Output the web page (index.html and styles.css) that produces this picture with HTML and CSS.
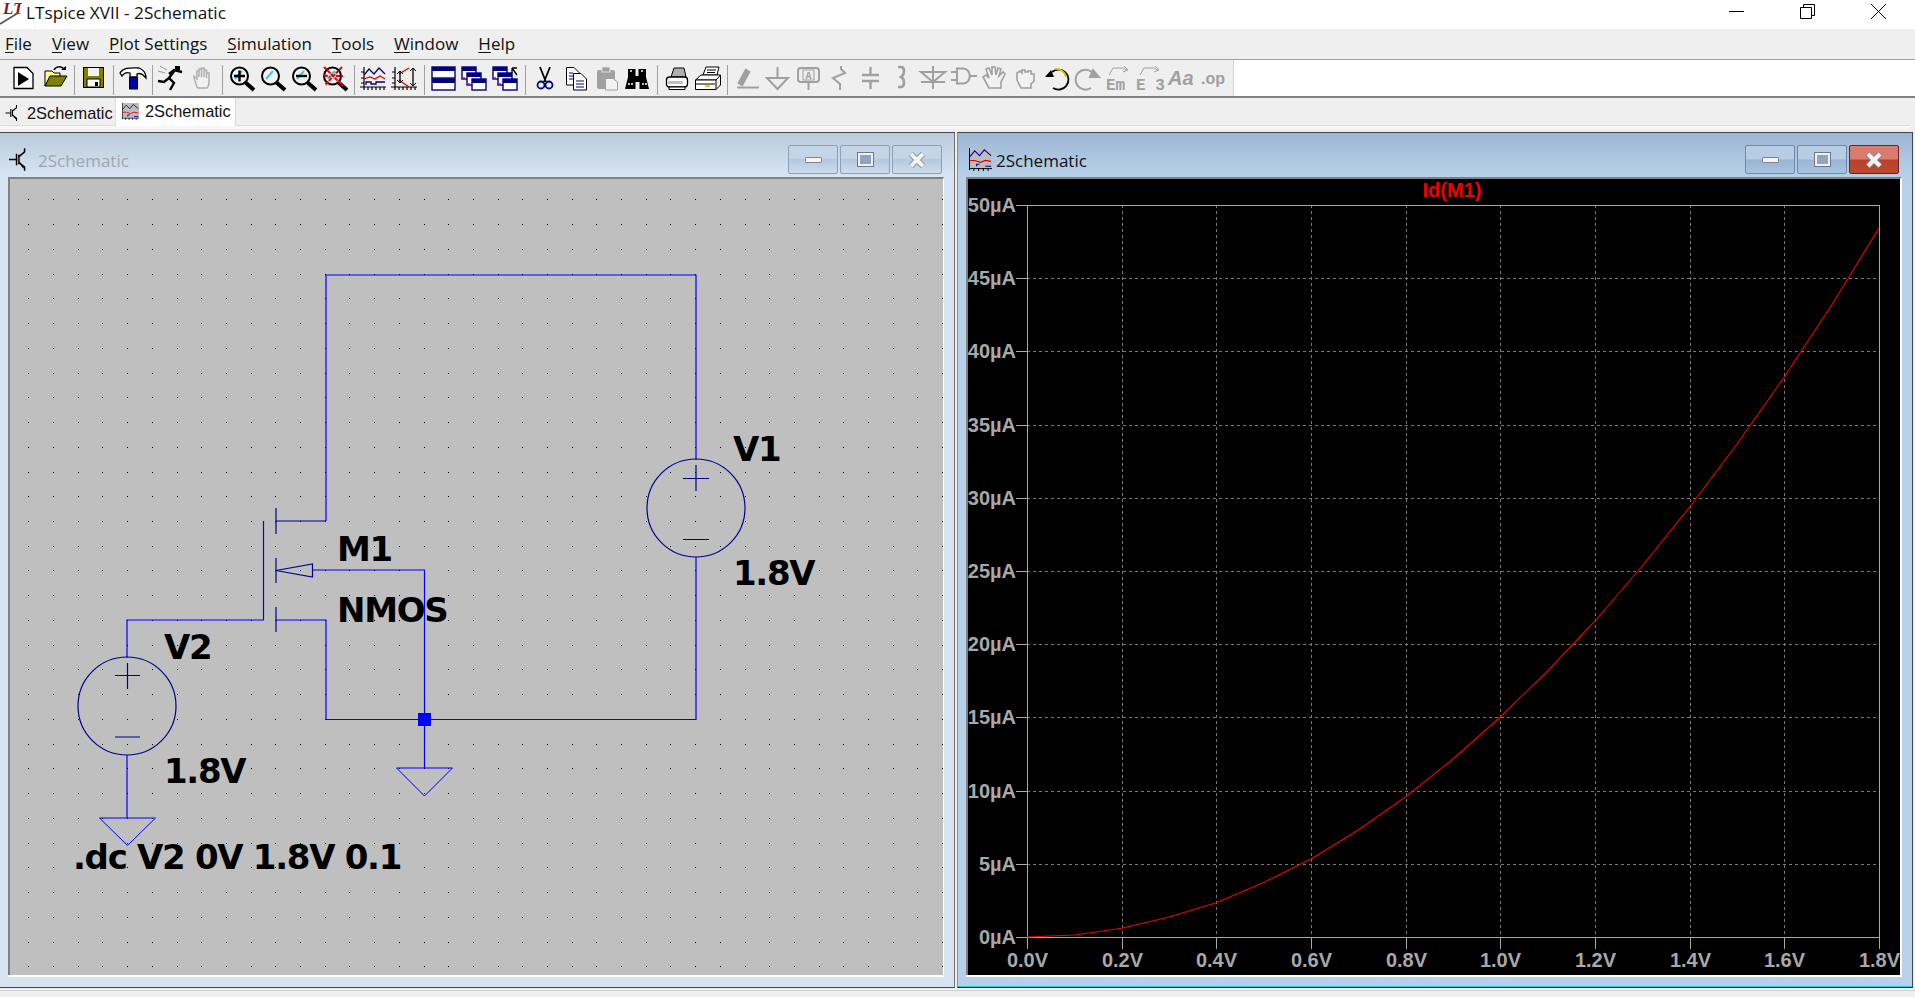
FILE: index.html
```html
<!DOCTYPE html>
<html lang="en">
<head>
  <meta charset="UTF-8" />
  <title>LTspice XVII - 2Schematic</title>
  <link rel="stylesheet" href="styles.css">
</head>
<body>
  <svg class="defs" width="0" height="0">
    <symbol id="fet" viewBox="0 0 18 24">
      <path d="M0 12H8M8 6V18M10.5 7V17M10.5 9L16.5 4V0M10.5 15L16.5 20V24" fill="none" stroke="#000" stroke-width="1.6"/>
      <path d="M12 17.5L16.5 19L15 21.5Z" fill="#000"/>
    </symbol>
    <symbol id="plot" viewBox="0 0 24 24">
      <rect width="24" height="21" fill="#bdbdbd"/>
      <path d="M1 9L6 3L11 8L16 2L23 8" fill="none" stroke="#0000c0" stroke-width="1.2"/>
      <path d="M1 13H6L12 15L17 13L23 14" fill="none" stroke="#e00000" stroke-width="1.2"/>
      <path d="M8 19V17H11M17 19H23" fill="none" stroke="#0000c0" stroke-width="1.2"/>
      <path d="M0.5 0V23M0 21.5H24M5 21V24M10 21V24M15 21V24M20 21V24" fill="none" stroke="#000"/>
    </symbol>
    <symbol id="glass" viewBox="0 0 31 37">
      <circle cx="13.5" cy="16" r="8.5" fill="#f2f2f2" stroke="#000" stroke-width="2"/>
      <path d="M9 19L16 11" stroke="#30d0e0" stroke-width="2"/>
      <path d="M19.5 22.5L28 30" stroke="#000" stroke-width="4"/>
    </symbol>
    <symbol id="axes" viewBox="0 0 31 37">
      <path d="M6 7V30M2 27H28M10 27V30M14 27V30M18 27V30M22 27V30M26 27V30M3 12H6M3 18H6M3 23H6" fill="none" stroke="#000" stroke-width="1.2"/>
    </symbol>
    <symbol id="cascade" viewBox="0 0 31 37">
      <g fill="#fff" stroke="#000080" stroke-width="1.4">
        <rect x="3" y="7" width="14" height="12"/>
        <rect x="8" y="13" width="14" height="12"/>
        <rect x="13" y="19" width="14" height="11"/>
      </g>
      <path d="M3 7h14v4H3zM8 13h14v4H8zM13 19h14v4H13z" fill="#000080"/>
      <path d="M3 18h3M8 24h3" stroke="#c000c0" stroke-width="1.4"/>
    </symbol>
  </svg>

  <header class="titlebar">
    <svg class="logo" width="22" height="29" viewBox="0 0 22 29">
      <text class="logo-text" x="3" y="14">LT</text>
      <path d="M0 24L18 13" stroke="#555" stroke-width="1.5"/>
    </svg>
    <span class="app-title">LTspice XVII - 2Schematic</span>
    <div class="sys-buttons">
      <svg width="15" height="15" viewBox="0 0 15 15"><path d="M0 7.5H15" stroke="#000"/></svg>
      <svg width="15" height="15" viewBox="0 0 15 15"><path d="M0.5 3.5H11.5V14.5H0.5ZM3.5 3.5V0.5H14.5V11.5H11.5" fill="none" stroke="#000"/></svg>
      <svg width="15" height="15" viewBox="0 0 15 15"><path d="M0 0L15 15M15 0L0 15" stroke="#000"/></svg>
    </div>
  </header>

  <nav class="menubar">
    <span><u>F</u>ile</span>
    <span><u>V</u>iew</span>
    <span><u>P</u>lot Settings</span>
    <span><u>S</u>imulation</span>
    <span><u>T</u>ools</span>
    <span><u>W</u>indow</span>
    <span><u>H</u>elp</span>
  </nav>

  <div class="toolbar">
    <div class="tools">
      <!-- new -->
      <svg class="tool"><path d="M6 7.5H19L25 13.5V28.5H6Z" fill="#fff" stroke="#000" stroke-width="1.3"/><path d="M10 12L21 19L10 26Z" fill="#000"/></svg>
      <!-- open -->
      <svg class="tool"><path d="M6 26V11H13L15 13H21V17H11L6 26Z" fill="#ffff90" stroke="#000"/><path d="M6 26L11 16H28L22 26Z" fill="#808000" stroke="#000"/><path d="M15 10C17 6 22 6 25 9" fill="none" stroke="#000" stroke-width="1.5"/><path d="M22 10H27V6Z" fill="#000"/></svg>
      <i class="sep"></i>
      <!-- save -->
      <svg class="tool"><rect x="5.5" y="7.5" width="20" height="20" fill="#808000" stroke="#000"/><rect x="10" y="8" width="11" height="8" fill="#f2f2f2"/><rect x="9" y="19" width="13" height="8" fill="#fff" stroke="#000"/><rect x="17" y="22" width="3" height="4" fill="#000"/></svg>
      <i class="sep"></i>
      <!-- hammer -->
      <svg class="tool"><path d="M3 13C7 7 14 8 22 8C27 10 29 14 29 18C25 13 22 13 20 14V17H13V13C10 12 7 13 5 16Z" fill="#fff" stroke="#000" stroke-width="1.3"/><rect x="12.5" y="17.5" width="8" height="11.5" fill="#0000a8" stroke="#000"/></svg>
      <i class="sep"></i>
      <!-- run -->
      <svg class="tool run"><path d="M19 10L13 18L18 23L14 30M13 18L8 22L2 21M13 14L18 10L26 12" fill="none" stroke="#000" stroke-width="2.4"/><rect x="19" y="6" width="5" height="4"/><path d="M4 6L11 10M2 11L9 13" stroke="#999"/></svg>
      <!-- hand -->
      <svg class="tool"><path d="M10 27L7 18V16L10 19V11H12V17V9H14.5V17V8H17V17V10H19.5V18V13H22V21C22 25 21 27 20 28H11Z" fill="#f2f2f2" stroke="#b0b0b0" stroke-width="1.5"/></svg>
      <i class="sep"></i>
      <!-- zoom in, zoom fit, zoom out, cancel zoom -->
      <svg class="tool"><use href="#glass"/><path d="M8 16H19M13.5 10.5V21.5" stroke="#000" stroke-width="2.4"/></svg>
      <svg class="tool"><use href="#glass"/></svg>
      <svg class="tool"><use href="#glass"/><path d="M8 16H19" stroke="#000" stroke-width="2.4"/></svg>
      <svg class="tool"><use href="#glass"/><path d="M5 7L24 26M23 7L6 25M5 15L11 17M17 16H24" stroke="#f00000" stroke-width="2" stroke-dasharray="4 1"/></svg>
      <i class="sep"></i>
      <!-- waveforms -->
      <svg class="tool"><use href="#axes"/><path d="M6 15L11 9L16 14L21 8L27 14" fill="none" stroke="#000080" stroke-width="1.3"/><path d="M6 19L12 17L17 19L22 16L27 19" fill="none" stroke="#e00000" stroke-width="1.3"/><path d="M8 25V22H13V24H18V22H27" fill="none" stroke="#000080" stroke-width="1.3"/></svg>
      <svg class="tool"><use href="#axes"/><path d="M10 14L20 8M10 20L20 27" fill="none" stroke="#e00000" stroke-width="1.3"/><path d="M11 11V23M24 8V26" stroke="#000" stroke-width="1.3"/><path d="M8 14L11 11L14 14M8 20L11 23L14 20M21 11L24 8L27 11M21 23L24 26L27 23" fill="none" stroke="#000"/></svg>
      <i class="sep"></i>
      <!-- tile, cascade, arrange -->
      <svg class="tool"><rect x="4" y="7" width="23" height="11" fill="#fff" stroke="#000080" stroke-width="1.4"/><rect x="4" y="19" width="23" height="11" fill="#fff" stroke="#000080" stroke-width="1.4"/><path d="M4 7h23v4H4zM4 19h23v4H4z" fill="#000080"/></svg>
      <svg class="tool"><use href="#cascade"/></svg>
      <svg class="tool"><use href="#cascade"/><path d="M27 15L22 8M22 8H27M22 8V13" fill="none" stroke="#000" stroke-width="1.3"/></svg>
      <i class="sep"></i>
      <!-- cut -->
      <svg class="tool"><path d="M11 7L17 22M21 7L15 22" stroke="#000" stroke-width="1.8"/><circle cx="12" cy="25" r="3.5" fill="none" stroke="#000080" stroke-width="1.8"/><circle cx="20" cy="25" r="3.5" fill="none" stroke="#000080" stroke-width="1.8"/></svg>
      <!-- copy -->
      <svg class="tool"><path d="M6.5 7.5H14L19 12.5V25H6.5Z" fill="#fff" stroke="#000"/><path d="M13.5 13.5H21L26.5 19V30H13.5Z" fill="#fff" stroke="#000"/><path d="M9 13H13M9 16H13M9 19H13M16 21H24M16 24H24M16 27H24" stroke="#000080"/></svg>
      <!-- paste -->
      <svg class="tool"><rect x="6" y="10" width="18" height="19" rx="2" fill="#a0a0a0"/><rect x="11" y="7" width="8" height="5" fill="#a0a0a0" stroke="#e0e0e0"/><path d="M14.5 18.5H22L26.5 22V30H14.5Z" fill="#f2f2f2" stroke="#a0a0a0"/></svg>
      <!-- find -->
      <svg class="tool"><path d="M6 9H13.5V16H16.5V9H24V17L27 29H17.5V22H13.5V29H3L6 17Z" fill="#000"/><path d="M8 11H11M19 11H22M6 24H11M20 24H25" stroke="#fff" stroke-width="1.4" stroke-dasharray="2 1"/></svg>
      <i class="sep"></i>
      <!-- print, print setup -->
      <svg class="tool"><path d="M10 17L13 8H23L25 17Z" fill="#b0b0b0" stroke="#000"/><rect x="5.5" y="17" width="21" height="10" rx="3" fill="#fff" stroke="#000" stroke-width="1.3"/><path d="M8 27H24V29.5H8Z" fill="#fff" stroke="#000"/><path d="M7 21H22V24H7Z" fill="#c0c0c0"/></svg>
      <svg class="tool"><path d="M11 15L14 7H27L25 15Z" fill="#fff" stroke="#000"/><path d="M15 10H24M15 12.5H23" stroke="#000"/><path d="M3.5 20L9 15H28.5L24 20Z" fill="#fff" stroke="#000"/><path d="M3.5 20H24V29.5H3.5Z" fill="#fff" stroke="#000"/><path d="M24 29.5L28.5 25V15" fill="none" stroke="#000"/><path d="M4 24H23" stroke="#000"/><rect x="13" y="25" width="5" height="2" fill="#e0d000"/></svg>
      <i class="sep"></i>
      <!-- schematic parts, all greyed out -->
      <svg class="tool off"><path d="M9 25L17 10" stroke-width="6"/><path d="M6 27.5H28"/></svg>
      <svg class="tool off"><path d="M15.5 7V18M5 18H26L15.5 29Z"/></svg>
      <svg class="tool off"><rect x="5" y="8" width="21" height="14" rx="3"/><rect x="10" y="10" width="11" height="10" stroke-width="1"/><text class="part-a" x="15.5" y="19" text-anchor="middle">A</text><path d="M15.5 22V30"/></svg>
      <svg class="tool off"><path d="M17 6V9L21 13L9 18L16 24V30"/></svg>
      <svg class="tool off"><path d="M15.5 7V15M7 15H24M7 21H24M15.5 21V29" stroke-width="2.4"/></svg>
      <svg class="tool off"><path d="M12 7H15C19 7 19 14 15 17C19 19 19 26 15 27H12" stroke-width="2.6"/></svg>
      <svg class="tool off"><path d="M16 6V29M4 12H28L16 22ZM4 22H28"/></svg>
      <svg class="tool off"><path d="M3 12H9M3 20H9M9 8.5H15C24 8.5 24 23.5 15 23.5H9ZM21 16H29"/></svg>
      <svg class="tool off hand"><path d="M10 28L4 17L7 15L10 18L7 9L10 8L13 15L13 7H16L17 15L19 8L22 9L20 16L24 12L26 14L22 22V28Z"/></svg>
      <svg class="tool off hand"><path d="M11 28L7 20V13L10 11L12 13V10H15V12H18V11H21V14L24 14V21L21 24V28Z"/></svg>
      <svg class="tool"><path d="M11 12A10 10 0 1 1 12 28" fill="none" stroke="#000" stroke-width="1.8"/><path d="M14 9A10 10 0 0 1 25 17" fill="none" stroke="#d8c000" stroke-width="1.8"/><path d="M4 17H13L10 10Z" fill="#000"/></svg>
      <svg class="tool off"><path d="M20 12A10 10 0 1 0 19 28"/><path d="M27 17H18L21 10Z" fill="#a0a0a0"/></svg>
      <svg class="tool off"><path d="M6 15L10 8H20L24 10M21 6L25 10L20 12" stroke-width="1"/><text class="part-e" x="3" y="30">Em</text></svg>
      <svg class="tool off"><path d="M6 15L10 8H20L24 10M21 6L25 10L20 12" stroke-width="1"/><text class="part-e" x="2" y="30">E 3</text></svg>
      <svg class="tool off"><text class="part-aa" x="3" y="25">Aa</text></svg>
      <svg class="tool off"><text class="part-op" x="5" y="24">.op</text></svg>
    </div>
  </div>

  <div class="tabs">
    <div class="tab">
      <svg class="tab-fet"><use href="#fet"/></svg>
      <span>2Schematic</span>
    </div>
    <div class="tab active">
      <svg class="tab-plot"><use href="#plot"/></svg>
      <span>2Schematic</span>
    </div>
  </div>
  <div class="tab-strip"></div>

  <main class="mdi">
    <section class="win schematic">
      <div class="win-title">
        <svg class="win-fet"><use href="#fet"/></svg>
        <span class="win-name">2Schematic</span>
        <div class="win-buttons">
          <button class="win-btn"><i class="glyph-min"></i></button>
          <button class="win-btn"><i class="glyph-max"></i></button>
          <button class="win-btn"><svg width="20" height="20" viewBox="0 0 20 20"><path d="M4 4L16 16M16 4L4 16" stroke="#808890" stroke-width="6"/><path d="M4 4L16 16M16 4L4 16" stroke="#f4f4f4" stroke-width="4"/></svg></button>
        </div>
      </div>
      <div class="client">
        <svg id="schematic" class="canvas" viewBox="10 179 933 796">
          <g id="dots"></g>
          <g class="wires">
            <path d="M326 521V275H696V460M696 557V719.5H326V620H276M424.5 719.5V570H312M424.5 719.5V768"/>
            <path d="M263.5 521V620H127V658M127 755V818"/>
          </g>
          <g class="part">
            <path d="M276 508V534M276 558V583M276 607V632M276 521H326"/>
            <path d="M276 570.5L312.5 564V577Z"/>
            <circle cx="127" cy="706" r="49"/>
            <path d="M115 675.5H140M127.5 663V689M115 737H140"/>
            <circle cx="696" cy="508" r="49"/>
            <path d="M683 478.5H709M696 465V491M683 539.5H709"/>
          </g>
          <g class="grounds">
            <path d="M99.5 818H155.5L127.5 845.5Z"/>
            <path d="M396.5 768H452.5L424.5 796Z"/>
          </g>
          <rect class="junction" x="418" y="713" width="13" height="13"/>
          <g class="netlist">
            <text x="733" y="461">V1</text>
            <text x="733" y="585">1.8V</text>
            <text x="337" y="561">M1</text>
            <text x="337" y="622">NMOS</text>
            <text x="164" y="659">V2</text>
            <text x="164" y="783">1.8V</text>
            <text x="73" y="869">.dc V2 0V 1.8V 0.1</text>
          </g>
        </svg>
      </div>
    </section>

    <section class="win waveform">
      <div class="win-title">
        <svg class="win-plot"><use href="#plot"/></svg>
        <span class="win-name">2Schematic</span>
        <div class="win-buttons">
          <button class="win-btn"><i class="glyph-min"></i></button>
          <button class="win-btn"><i class="glyph-max"></i></button>
          <button class="win-btn close"><svg width="20" height="20" viewBox="0 0 20 20"><path d="M4 4L16 16M16 4L4 16" stroke="#808890" stroke-width="6"/><path d="M4 4L16 16M16 4L4 16" stroke="#f4f4f4" stroke-width="4"/></svg></button>
        </div>
      </div>
      <div class="client">
        <svg id="plotArea" class="canvas black" viewBox="968 179 932 796">
          <text class="trace-name" x="1452" y="197" text-anchor="middle">Id(M1)</text>
          <g id="grid"></g>
          <polyline class="trace" points=""/>
        </svg>
      </div>
    </section>
  </main>
  <footer class="statusbar"></footer>

  <script src="script.js"></script>
</body>
</html>
```

FILE: styles.css
```css
* {
  box-sizing: border-box;
}
body {
  margin: 0;
  width: 1915px;
  height: 997px;
  overflow: hidden;
  background: #efefef;
  font-family: "Open Sans", "Noto Sans", sans-serif;
  color: #111;
}
.defs {
  position: absolute;
}

.titlebar {
  height: 29px;
  background: white;
  display: flex;
  align-items: center;
  overflow: hidden;
}
.logo {
  flex: none;
}
.logo-text {
  font: italic bold 17px "Liberation Serif", serif;
  fill: #8b1a1a;
}
.app-title {
  margin-left: 4px;
  margin-top: -4px;
  font-size: 17.2px;
}
.sys-buttons {
  margin-left: auto;
  padding-right: 29px;
  display: flex;
  gap: 56px;
  margin-top: -6px;
}

.menubar {
  height: 31px;
  display: flex;
  align-items: center;
  gap: 20px;
  padding-left: 5px;
  padding-bottom: 1px;
  font-size: 17px;
  border-bottom: 1px solid #a0a0a0;
}
.menubar u {
  text-underline-offset: 2px;
}

.toolbar {
  height: 38px;
  background: white;
  border-bottom: 2px solid #808080;
}
.tools {
  width: 1234px;
  height: 36px;
  background: #efefef;
  padding-left: 8px;
  display: flex;
  border-right: 1px solid #d0d0d0;
}
.tool {
  flex: none;
  width: 31px;
  height: 37px;
}
.tool use {
  width: 31px;
  height: 37px;
}
.sep {
  flex: none;
  width: 8px;
  height: 30px;
  margin-top: 5px;
  background: linear-gradient(#a0a0a0, #a0a0a0) center / 1px 100% no-repeat;
}
.off {
  fill: none;
  stroke: #a0a0a0;
  stroke-width: 2;
}
.off.hand {
  fill: #f2f2f2;
  stroke-width: 1.6;
}
.off text {
  fill: #a0a0a0;
  stroke: none;
}
.part-a {
  font: bold 10px "Liberation Mono", monospace;
}
.part-e {
  font: bold 16px "Liberation Mono", monospace;
}
.part-aa {
  font: italic bold 20px "Liberation Sans", sans-serif;
}
.part-op {
  font: bold 16px "Liberation Sans", sans-serif;
}

.tabs {
  height: 28px;
  display: flex;
  font-family: "Liberation Sans", sans-serif;
  font-size: 16.4px;
}
.tab {
  width: 116px;
  display: flex;
  align-items: center;
  gap: 9px;
  padding: 2px 0 0 5px;
  border-right: 1px solid #dcdcdc;
}
.tab.active {
  width: 120px;
  background: white;
  gap: 6px;
  padding: 0 0 2px 6px;
}
.tab-fet {
  width: 13px;
  height: 16px;
}
.tab-plot {
  width: 17px;
  height: 17px;
}
.tab-strip {
  height: 6px;
  margin-right: 5px;
  border-top: 3px solid #f8f8f8;
  box-shadow: 0 -1px 0 #dcdcdc;
}

.mdi {
  display: flex;
  height: 856px;
}
.win {
  display: flex;
  flex-direction: column;
  border-top: 1px solid #444;
  border-bottom: 1px solid #444;
}
.schematic {
  width: 955px;
  padding: 0 10px 10px 8px;
  border-right: 1px solid #707070;
  background: #d6e4f2;
}
.waveform {
  width: 956px;
  margin-left: 2px;
  padding: 0 10px 9px 8px;
  border-left: 1px solid #8090a0;
  border-right: 1px solid #444;
  border-bottom-color: #222;
  background: #b8d1ea;
  box-shadow: inset 0 -1px 0 #30c0e0;
}
.win-title {
  height: 44px;
  display: flex;
  align-items: center;
  flex: none;
  margin-left: -8px;
  margin-right: -10px;
  padding: 8px 0 0 9px;
  background: linear-gradient(#bccbdb, #d6e4f3);
  font-size: 17px;
}
.waveform .win-title {
  background: linear-gradient(#9cb6d3, #b8d1ea);
}
.win-fet {
  width: 17px;
  height: 23px;
}
.win-plot {
  width: 23px;
  height: 23px;
  margin-left: 2px;
}
.win-name {
  margin-left: 12px;
  margin-top: 2px;
  font-family: "Open Sans", sans-serif;
  color: #a0a6ae;
}
.waveform .win-name {
  margin-left: 4px;
  color: #111;
}
.win-buttons {
  margin-left: auto;
  display: flex;
  gap: 2px;
  padding-right: 12px;
  margin-top: 1px;
}
.waveform .win-buttons {
  padding-right: 13px;
}
.win-btn {
  width: 50px;
  height: 29px;
  padding: 0;
  display: flex;
  align-items: center;
  justify-content: center;
  border: 1px solid #8ba0bb;
  border-radius: 2px;
  background: linear-gradient(#c5d5e8 45%, #b4c8de 50%, #cddcee);
}
.waveform .win-btn {
  border-color: #6f8aa8;
  background: linear-gradient(#b8cde5 48%, #9ab4d2 52%, #a8c3e0);
}
.waveform .win-btn.close {
  border-color: #6a2030;
  background: linear-gradient(#d97b6e 48%, #b8412a 52%, #bd4a30);
}
.glyph-min {
  width: 17px;
  height: 6px;
  background: #f4f4f4;
  border: 1px solid #7b8594;
  border-radius: 1px;
}
.glyph-max {
  width: 17px;
  height: 15px;
  border: 3px solid #eef0f3;
  outline: 1px solid #70798a;
  outline-offset: -1px;
  background: #8fa5c0;
}

.client {
  flex: none;
  height: 798px;
  border-style: solid;
  border-color: #808080 white white #808080;
  border-width: 2px 1px 0 2px;
  background: #bfbfbf;
  box-shadow: 0 2px 0 white;
}
.waveform .client {
  height: 798px;
  border-width: 2px 2px 0 2px;
  background: black;
}
.canvas {
  display: block;
  width: 100%;
  height: 796px;
}

.wires {
  fill: none;
  stroke: #0000ff;
  stroke-width: 1.2;
}
.part {
  fill: none;
  stroke: #000090;
  stroke-width: 1.2;
}
.grounds {
  fill: none;
  stroke: #0000ff;
  stroke-width: 1;
}
.junction {
  fill: #0000ff;
}
.dot {
  fill: #000;
}
.netlist text {
  font: bold 34px "DejaVu Sans", sans-serif;
  letter-spacing: -1.3px;
  fill: #000;
}

.axis {
  stroke: #a8a8a8;
  stroke-width: 1;
  fill: none;
  shape-rendering: crispEdges;
}
.gridline {
  stroke: #787878;
  stroke-width: 1;
  stroke-dasharray: 3 3;
  shape-rendering: crispEdges;
}
.tick-label {
  font: bold 20px "Liberation Sans", sans-serif;
  fill: #a8a8a8;
}
.trace-name {
  font: bold 20px "Liberation Sans", sans-serif;
  fill: #f00000;
}
.trace {
  fill: none;
  stroke: #f00000;
  stroke-width: 1.1;
}

.statusbar {
  height: 8px;
  border-top: 1px solid #d0d0d0;
  margin-top: 2px;
}
```

FILE: script.js
```js
const SVG_NS = "http://www.w3.org/2000/svg";

function add(parent, tag, attrs, text) {
  const el = document.createElementNS(SVG_NS, tag);
  for (const key in attrs) el.setAttribute(key, attrs[key]);
  if (text) el.textContent = text;
  parent.appendChild(el);
}

// schematic grid dots
const dots = document.getElementById("dots");
for (let i = 0; i < 38; i++) {
  for (let j = 0; j < 32; j++) {
    add(dots, "rect", {
      class: "dot",
      x: Math.round(28.3 + 24.7 * i),
      y: Math.round(966.3 - 24.74 * j),
      width: 1,
      height: 1
    });
  }
}

// plot axes and labels
const grid = document.getElementById("grid");
const LEFT = 1027, RIGHT = 1879, TOP = 205, BOTTOM = 937;
const stepX = (RIGHT - LEFT) / 9;
const stepY = (BOTTOM - TOP) / 10;

for (let i = 0; i <= 10; i++) {
  const y = Math.round(BOTTOM - stepY * i) + 0.5;
  if (i > 0 && i < 10) add(grid, "line", { class: "gridline", x1: LEFT, y1: y, x2: RIGHT, y2: y });
  add(grid, "line", { class: "axis", x1: LEFT - 11, y1: y, x2: LEFT, y2: y });
  add(grid, "text", { class: "tick-label", x: LEFT - 11, y: y + 6.5, "text-anchor": "end" }, (i * 5) + "µA");
}
for (let i = 0; i <= 9; i++) {
  const x = Math.round(LEFT + stepX * i) + 0.5;
  if (i > 0 && i < 9) add(grid, "line", { class: "gridline", x1: x, y1: TOP, x2: x, y2: BOTTOM });
  add(grid, "line", { class: "axis", x1: x, y1: BOTTOM, x2: x, y2: BOTTOM + 12 });
  add(grid, "text", { class: "tick-label", x: x, y: BOTTOM + 30, "text-anchor": "middle" }, (i * 0.2).toFixed(1) + "V");
}
add(grid, "rect", { class: "axis", x: LEFT + 0.5, y: TOP + 0.5, width: RIGHT - LEFT, height: BOTTOM - TOP });

// Id(M1) read off the curve, one y per 0.1V
const curve = [937, 935, 928.3, 917, 902.7, 882.5, 859, 830, 796.7, 759, 717, 671, 621, 566, 507, 444, 377, 305, 228];
const points = curve.map((y, i) => (LEFT + stepX * i / 2).toFixed(1) + "," + y);
document.querySelector(".trace").setAttribute("points", points.join(" "));
```
